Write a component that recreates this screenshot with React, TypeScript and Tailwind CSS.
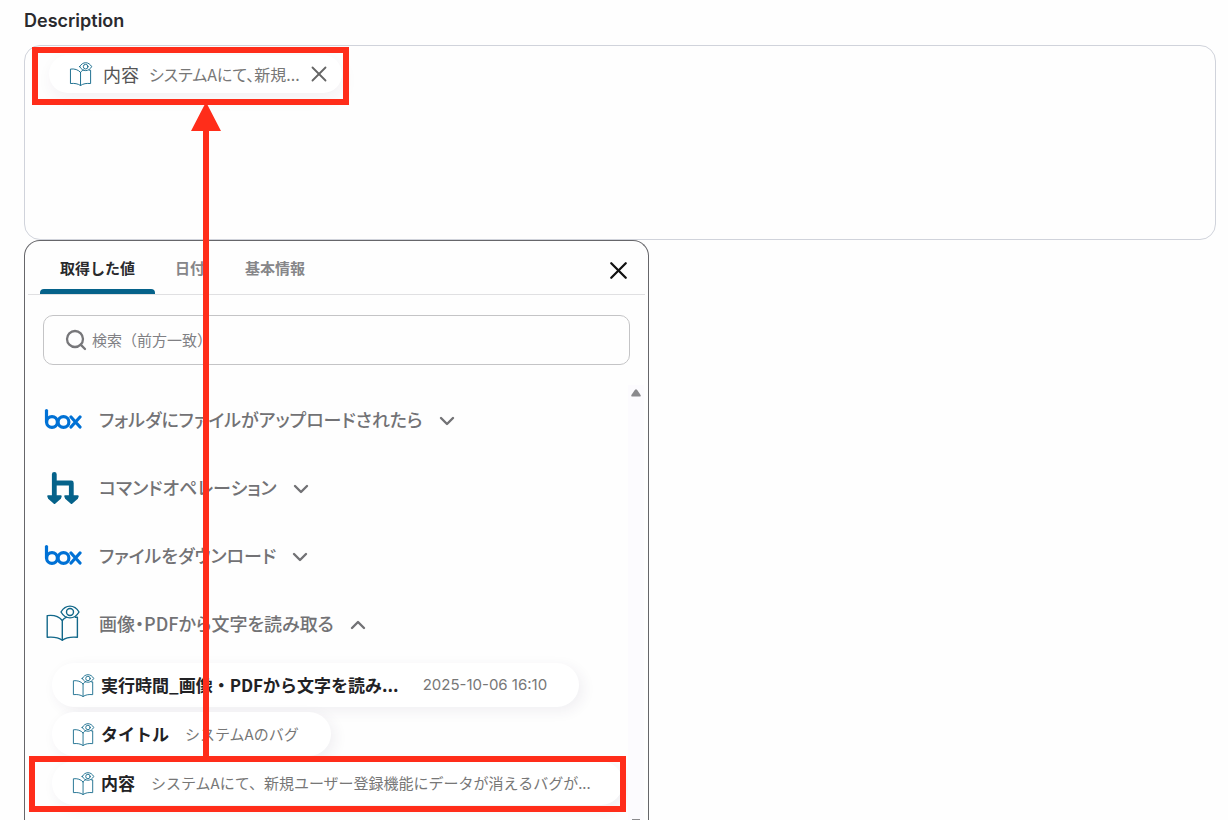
import { ChevronDown, ChevronUp, Search, X } from 'lucide-react';

const JP_FONT = "font-['Noto_Sans_CJK_JP',sans-serif]";

function BoxLogo() {
  return (
    <svg viewBox="0 0 38 22" className="w-[38px] h-[22px]" fill="none" stroke="#0071d5" strokeWidth="3.2" strokeLinecap="round">
      <path d="M2.5 2.5V14" />
      <circle cx="8" cy="14" r="5.4" />
      <circle cx="19.5" cy="14" r="5.4" />
      <path d="M27 9l9 10M36 9l-9 10" />
    </svg>
  );
}

function CommandLogo() {
  return (
    <svg viewBox="0 0 34 34" className="w-[34px] h-[34px]" fill="#05628a" stroke="#05628a" strokeLinejoin="round">
      <path d="M8.300 4.300V26M8.300 13H25.300V26" fill="none" strokeWidth="4.800" strokeLinecap="round" />
      <path d="M2.300 26.300h12.400l-.8 2-5.400 4.700-5.400-4.700zM19.300 26.300h12.400l-.8 2-5.400 4.700-5.400-4.700z" strokeWidth="2" />
    </svg>
  );
}

function ReadLogo({ className }: { className: string }) {
  return (
    <svg viewBox="0 0 36 36" className={className} fill="none" stroke="#12688a" strokeWidth="1.4" strokeLinejoin="round" strokeLinecap="round">
      <path d="M17.3 15.5C14 11.5 8 9.8 2.2 10.6V32.3c6-.6 11.300.2 15.100 3 3.800-2.800 9.100-3.600 15.100-3V12.300h-2" />
      <path d="M17.300 15.500V35M17.300 15.500c1.200-1.700 2.700-2.800 4.300-3.400" />
      <path d="M16 7c2.200-3.800 5.300-5.900 9-5.900s6.800 2.100 9 5.900c-2.200 3.800-5.300 5.900-9 5.900S18.200 10.800 16 7z" />
      <circle cx="25" cy="7" r="3.500" />
    </svg>
  );
}

const tabs = [
  { label: '取得した値', active: true },
  { label: '日付', active: false },
  { label: '基本情報', active: false },
];

const sections = [
  { title: 'フォルダにファイルがアップロードされたら', icon: <BoxLogo />, open: false },
  { title: 'コマンドオペレーション', icon: <CommandLogo />, open: false },
  { title: 'ファイルをダウンロード', icon: <BoxLogo />, open: false },
  { title: '画像・PDFから文字を読み取る', icon: <ReadLogo className="w-9 h-9" />, open: true },
];

const values = [
  { name: '実行時間_画像・PDFから文字を読み...', value: '2025-10-06 16:10', date: true },
  { name: 'タイトル', value: 'システムAのバグ', date: false },
  { name: '内容', value: 'システムAにて、新規ユーザー登録機能にデータが消えるバグが...', date: false },
];

export default function App() {
  return (
    <main className={`relative h-screen overflow-hidden flex flex-col bg-[#fefefe] pl-6 pr-3 pt-[9px] ${JP_FONT}`}>
      <h2 id="description-label" className="font-['Inter',sans-serif] text-[18px] leading-6 font-semibold text-[#2a2a2e]">
        Description
      </h2>

      {/* Editor holding the dropped value */}
      <div
        role="textbox"
        aria-labelledby="description-label"
        className="mt-3 h-[195px] shrink-0 rounded-2xl border border-[#d0d3db] px-6 pt-[9px]"
      >
        <div className="inline-flex items-center h-[38px] rounded-full bg-white pl-5 pr-2.5 shadow-[2px_6px_16px_rgba(60,40,90,0.06)]">
          <ReadLogo className="w-6 h-6" />
          <span className="ml-2.5 text-[18px] leading-6 text-[#555]">内容</span>
          <span className="ml-2.5 text-[16px] leading-6 text-[#777] [font-feature-settings:'palt']">システムAにて、新規...</span>
          <button type="button" aria-label="削除" className="ml-1.5 text-[#666]">
            <X className="w-[26px] h-[26px]" strokeWidth={1.7} />
          </button>
        </div>
      </div>

      {/* Value picker */}
      <section className="flex-1 min-h-0 w-[625px] flex flex-col rounded-t-2xl border border-b-0 border-[#66666a] overflow-hidden">
        <div className="mx-[3px] h-[54px] shrink-0 flex items-stretch border-b border-[#e0e0e2] px-3">
          <div role="tablist" className="flex text-[15px] leading-6 font-bold">
            {tabs.map(({ label, active }) => (
              <button
                key={label}
                type="button"
                role="tab"
                aria-selected={active}
                className={`relative px-5 ${active ? 'text-[#2a2a2d]' : 'text-[#868689]'}`}
              >
                {label}
                {active && <span className="absolute inset-x-0 bottom-0 h-[5px] rounded-t bg-[#05628a]" />}
              </button>
            ))}
          </div>
          <button type="button" aria-label="閉じる" className="ml-auto mt-1.5 text-[#111]">
            <X className="w-[29px] h-[29px]" strokeWidth={1.9} />
          </button>
        </div>

        <label className="mx-[18px] mt-5 h-[50px] shrink-0 flex items-center gap-1 rounded-[10px] border border-[#c4c4c6] px-5">
          <Search className="w-6 h-6 text-[#77777a]" strokeWidth={2.3} />
          <input
            type="text"
            aria-label="検索"
            placeholder="検索（前方一致）"
            className="flex-1 bg-transparent text-[15px] outline-none placeholder:text-[#808084]"
          />
        </label>

        <div className="mt-5 flex-1 min-h-0 flex pr-1">
          <div className="flex-1 min-w-0 overflow-hidden">
            {sections.map(({ title, icon, open }, i) => (
              <button key={i} type="button" aria-expanded={open} className="w-full h-[68px] flex items-center pl-[18px] text-[#727275]">
                <span className="w-10 flex justify-center">{icon}</span>
                <span className="ml-4 text-[18px] leading-6 font-medium [font-feature-settings:'palt']">{title}</span>
                {open ? (
                  <ChevronUp className="ml-3 mt-1 w-6 h-6" strokeWidth={2.4} />
                ) : (
                  <ChevronDown className="ml-3 mt-1 w-6 h-6" strokeWidth={2.4} />
                )}
              </button>
            ))}
            <div className="mt-1.5 pl-[27px] pb-4 flex flex-col items-start gap-[5px]">
              {values.map(({ name, value, date }) => (
                <button
                  key={name}
                  type="button"
                  className="h-11 shrink-0 flex items-center rounded-full bg-white pl-5 pr-8 whitespace-nowrap shadow-[4px_4px_14px_rgba(60,40,90,0.07)]"
                >
                  <ReadLogo className="w-[23px] h-[23px]" />
                  <span className="ml-1.5 text-[17px] leading-6 font-bold text-[#222225]">{name}</span>
                  <span className={`text-[15px] leading-6 text-[#777] ${date ? "ml-6 font-['Inter',sans-serif]" : 'ml-4'}`}>{value}</span>
                </button>
              ))}
            </div>
          </div>
          {/* Scroll track */}
          <div className="w-4 flex flex-col items-center justify-between bg-[#fcfbfe] pt-1">
            <svg viewBox="0 0 10 8" className="w-2.5 h-2" fill="#8a8a8d">
              <path d="M4 .8q1-1.200 2 0L9.600 6q.5 1.500-1 1.500H1.400Q-.1 7.500.4 6z" />
            </svg>
            <span className="w-2 h-px bg-[#8a8a8d]" />
          </div>
        </div>
      </section>

      {/* Drag annotation */}
      <div className="absolute left-8 top-[47px] w-[317px] h-[58px] border-[6px] border-[#ff2d1a]" />
      <div className="absolute left-[29px] top-[756px] w-[597px] h-14 border-[6px] border-[#ff2d1a]" />
      <svg viewBox="0 0 30 656" className="absolute left-[191px] top-[102px] w-[30px] h-[656px]" fill="#ff2d1a">
        <path d="M15 0L30 29H18V656H12V29H0z" />
      </svg>
    </main>
  );
}
